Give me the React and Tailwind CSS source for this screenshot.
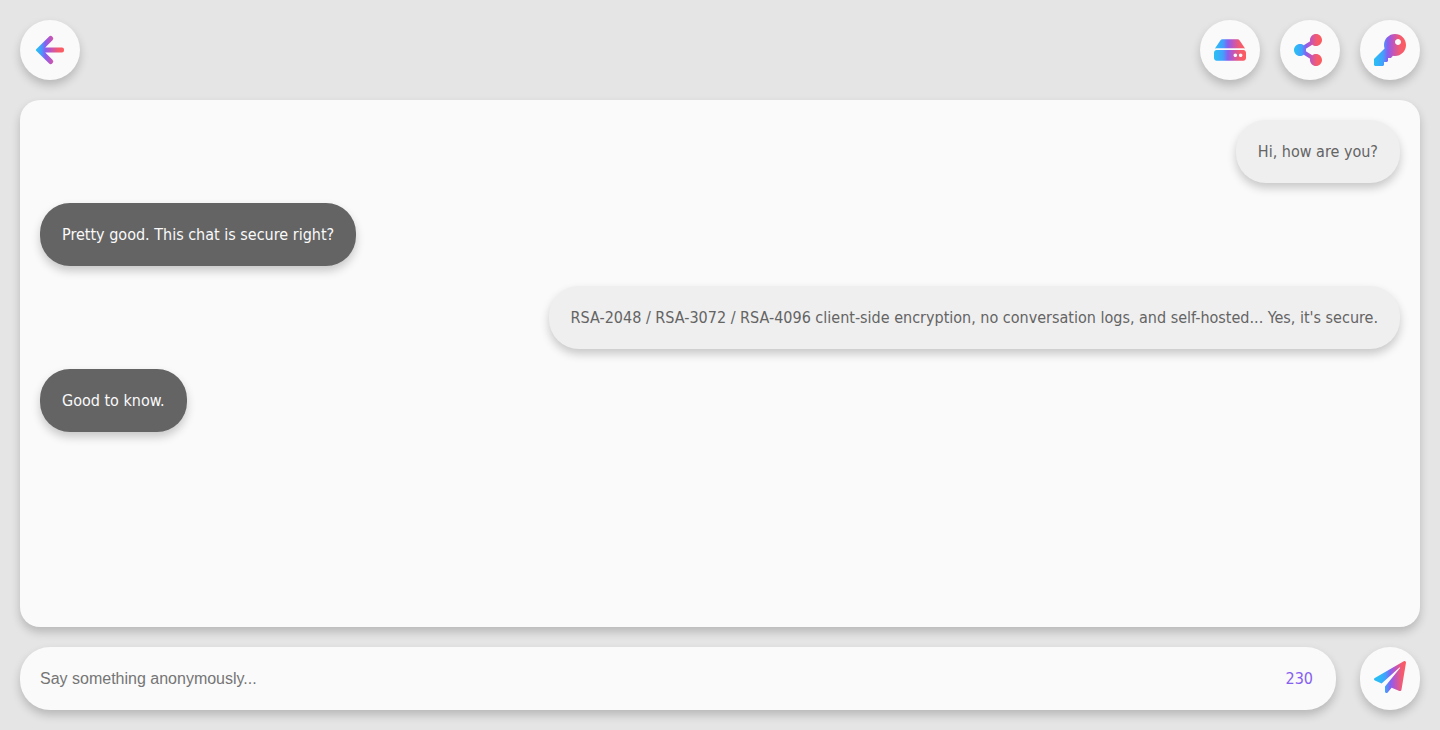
import React, { useState } from "react";
import { FaHdd, FaKey, FaPaperPlane, FaShareAlt } from "react-icons/fa";

const MAX_LENGTH = 230;

const messages = [
  { id: 1, mine: true, text: "Hi, how are you?" },
  { id: 2, mine: false, text: "Pretty good. This chat is secure right?" },
  {
    id: 3,
    mine: true,
    text: "RSA-2048 / RSA-3072 / RSA-4096 client-side encryption, no conversation logs, and self-hosted... Yes, it's secure.",
  },
  { id: 4, mine: false, text: "Good to know." },
];

const colors = ["#2bbcf5", "#42a0fc", "#8560f0", "#bd55c0", "#f25b72", "#ff5c5c"];

// Same colors everywhere, the offsets follow where each shape has its weight
const gradients = {
  "gradient-icon": [0.05, 0.28, 0.43, 0.58, 0.8, 1],
  "gradient-arrow": [0.05, 0.18, 0.34, 0.52, 0.78, 1],
  "gradient-plane": [0.15, 0.36, 0.52, 0.66, 0.86, 1],
};

const IconGradients = () => (
  <svg className="absolute size-0" aria-hidden="true">
    <defs>
      {Object.entries(gradients).map(([id, offsets]) => (
        <linearGradient key={id} id={id} x1="0" y1="0" x2="1" y2="0">
          {offsets.map((offset, i) => (
            <stop key={offset} offset={offset} stopColor={colors[i]} />
          ))}
        </linearGradient>
      ))}
    </defs>
  </svg>
);

const ArrowIcon = () => (
  <svg viewBox="0 0 32 32" className="size-8" aria-hidden="true">
    <path
      d="M2.2 15.2 14.9 2.7a2.5 2.5 0 0 1 3.6 3.5L11.2 13.5H28a2 2 0 0 1 2 2v1a2 2 0 0 1-2 2H11.2l7.3 7.3a2.5 2.5 0 0 1-3.6 3.5L2.2 16.8a1.1 1.1 0 0 1 0-1.6Z"
      fill="url(#gradient-arrow)"
    />
  </svg>
);

const RoundButton = ({ label, tall = false, children, ...props }) => (
  <button
    aria-label={label}
    className={`flex w-15 shrink-0 cursor-pointer items-start justify-center rounded-[30px] bg-[#fafafa] pt-3.5 shadow-[0_5px_10px_rgba(0,0,0,0.2)] ${
      tall ? "h-[63px]" : "h-15"
    }`}
    {...props}
  >
    {children}
  </button>
);

const Message = ({ mine, text }) => (
  <li
    className={`max-w-full rounded-[30px] px-[22px] py-5 leading-[23px] shadow-[0_5px_10px_rgba(0,0,0,0.2)] ${
      mine ? "self-end bg-[#efefef] text-[#646464]" : "self-start bg-[#646464] text-[#fafafa]"
    }`}
  >
    {text}
  </li>
);

export default function App() {
  const [draft, setDraft] = useState("");

  return (
    <div className="flex min-h-screen flex-col gap-5 bg-[#e5e5e5] p-5 font-[Tahoma,'DejaVu_Sans_Condensed','DejaVu_Sans',sans-serif] text-base">
      <IconGradients />

      <header className="flex items-center justify-between">
        <RoundButton label="Back" type="button">
          <ArrowIcon />
        </RoundButton>
        <nav className="flex gap-5">
          <RoundButton label="Server" type="button">
            <FaHdd className="size-8" fill="url(#gradient-icon)" />
          </RoundButton>
          <RoundButton label="Share" type="button">
            <FaShareAlt className="size-8" fill="url(#gradient-icon)" preserveAspectRatio="xMinYMid" />
          </RoundButton>
          <RoundButton label="Keys" type="button">
            <FaKey className="size-8" fill="url(#gradient-icon)" />
          </RoundButton>
        </nav>
      </header>

      <main className="flex-1 rounded-[20px] bg-[#fafafa] p-5 shadow-[0_5px_10px_rgba(0,0,0,0.2)]">
        <ul className="flex flex-col gap-5">
          {messages.map((message) => (
            <Message key={message.id} mine={message.mine} text={message.text} />
          ))}
        </ul>
      </main>

      <form className="flex gap-6" onSubmit={(e) => e.preventDefault()}>
        <div className="flex h-[63px] flex-1 items-center rounded-[30px] bg-[#fafafa] pr-[23px] pl-5 shadow-[0_5px_10px_rgba(0,0,0,0.2)]">
          <input
            type="text"
            aria-label="Message"
            placeholder="Say something anonymously..."
            maxLength={MAX_LENGTH}
            value={draft}
            onChange={(e) => setDraft(e.target.value)}
            className="min-w-0 flex-1 bg-transparent font-['Liberation_Sans',sans-serif] text-[#646464] outline-none placeholder:text-[#757575]"
          />
          <span className="text-[#8560f0]">{MAX_LENGTH - draft.length}</span>
        </div>
        <RoundButton label="Send" type="submit" tall>
          <FaPaperPlane className="size-8" fill="url(#gradient-plane)" />
        </RoundButton>
      </form>
    </div>
  );
}
